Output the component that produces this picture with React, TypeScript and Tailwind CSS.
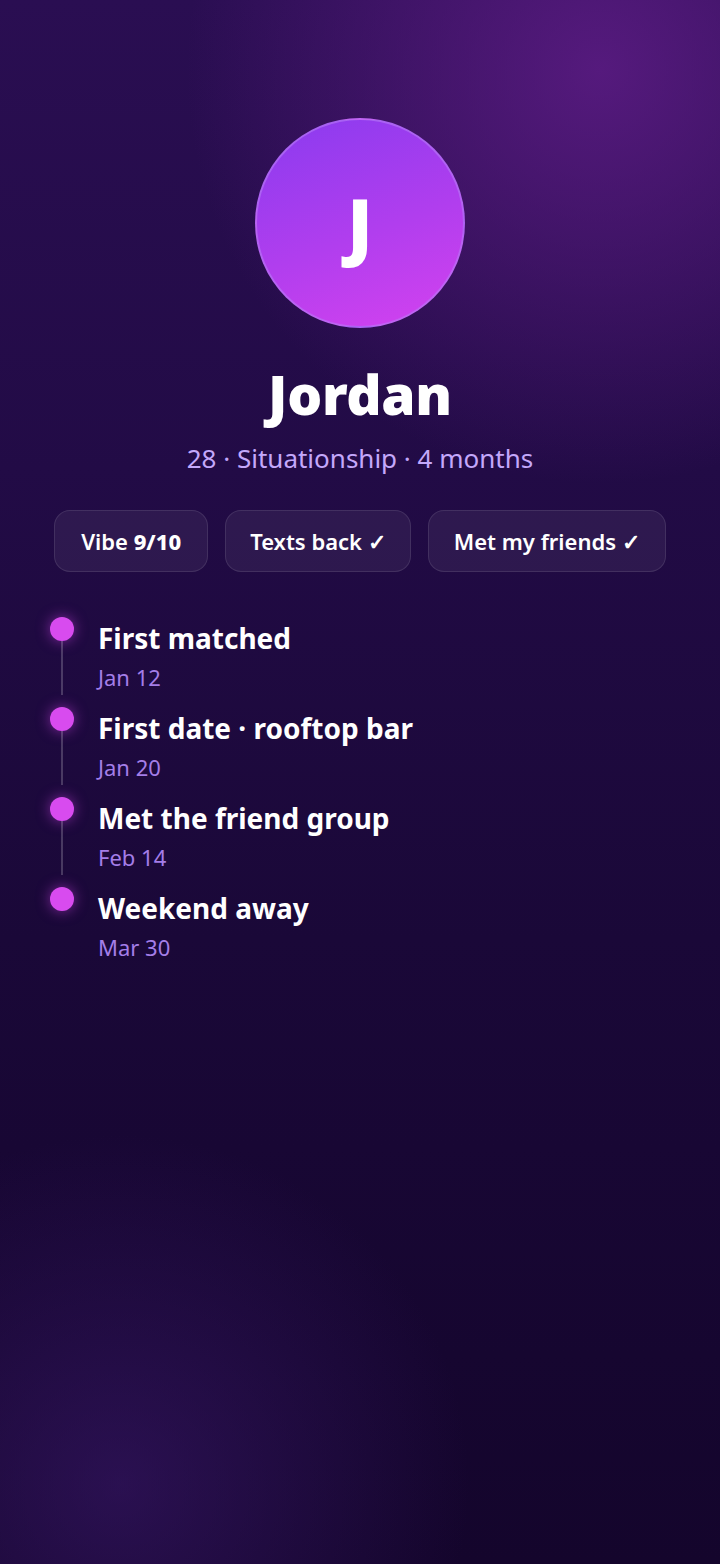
import React from "react";

const items = [
  { title: "First matched", date: "Jan 12" },
  { title: "First date · rooftop bar", date: "Jan 20" },
  { title: "Met the friend group", date: "Feb 14" },
  { title: "Weekend away", date: "Mar 30" },
];

export default function App() {
  return (
    <div
      className="relative w-[720px] h-[1564px] overflow-hidden bg-[linear-gradient(180deg,#2a0e52_0%,#220b46_30%,#1a0838_60%,#14052c_100%)]"
      style={{ fontFamily: '"Noto Sans", "Open Sans", sans-serif' }}
    >
      <div className="pointer-events-none absolute -right-[330px] -top-[380px] h-[900px] w-[900px] rounded-full bg-[radial-gradient(circle,rgba(100,30,140,0.75)_0%,rgba(100,30,140,0.35)_35%,rgba(100,30,140,0)_65%)]" />
      <div className="pointer-events-none absolute -left-[260px] bottom-[-300px] h-[760px] w-[760px] rounded-full bg-[radial-gradient(circle,rgba(60,25,110,0.55)_0%,rgba(60,25,110,0)_65%)]" />

      <div className="relative flex flex-col items-center pt-[118px]">
        <div className="flex h-[210px] w-[210px] items-center justify-center rounded-full border-2 border-[#b77cf5]/60 bg-[linear-gradient(160deg,#8a3bef_0%,#b13eee_55%,#d442ef_100%)]">
          <span className="mt-[2px] text-[72px] font-black leading-none text-white">J</span>
        </div>
        <h1 className="mt-[36px] text-[55px] font-black leading-[60px] text-white tracking-[-0.3px]">Jordan</h1>
        <p className="mt-[16px] text-[26px] leading-[36px] text-[#c4a8fb]">28 · Situationship · 4 months</p>

        <div className="mt-[34px] flex gap-[17px]">
          <div className="flex h-[62px] items-center rounded-[16px] border border-white/10 bg-white/[0.06] px-[26px] text-[22px] font-semibold text-white">
            Vibe&nbsp;<b className="font-extrabold">9/10</b>
          </div>
          <div className="flex h-[62px] items-center rounded-[16px] border border-white/10 bg-white/[0.06] px-[24px] text-[22px] font-semibold text-white">
            Texts back ✓
          </div>
          <div className="flex h-[62px] items-center rounded-[16px] border border-white/10 bg-white/[0.06] px-[25px] text-[22px] font-semibold text-white">
            Met my friends ✓
          </div>
        </div>
      </div>

      <div className="relative mt-[45px] flex flex-col pl-[50px]">
        {items.map((it, i) => (
          <div key={i} className="flex h-[90px]">
            <div className="flex w-[24px] flex-col items-center">
              <div className="h-[24px] w-[24px] rounded-full bg-[#d84bef] shadow-[0_0_14px_rgba(217,70,239,0.55)]" />
              {i < items.length - 1 && <div className="h-[54px] w-[2px] bg-white/20" />}
            </div>
            <div className="ml-[24px] flex flex-col">
              <div className="text-[28px] font-bold leading-[42px] text-white">{it.title}</div>
              <div className="mt-[3px] text-[22px] leading-[30px] text-[#a47ee8]">{it.date}</div>
            </div>
          </div>
        ))}
      </div>
    </div>
  );
}
